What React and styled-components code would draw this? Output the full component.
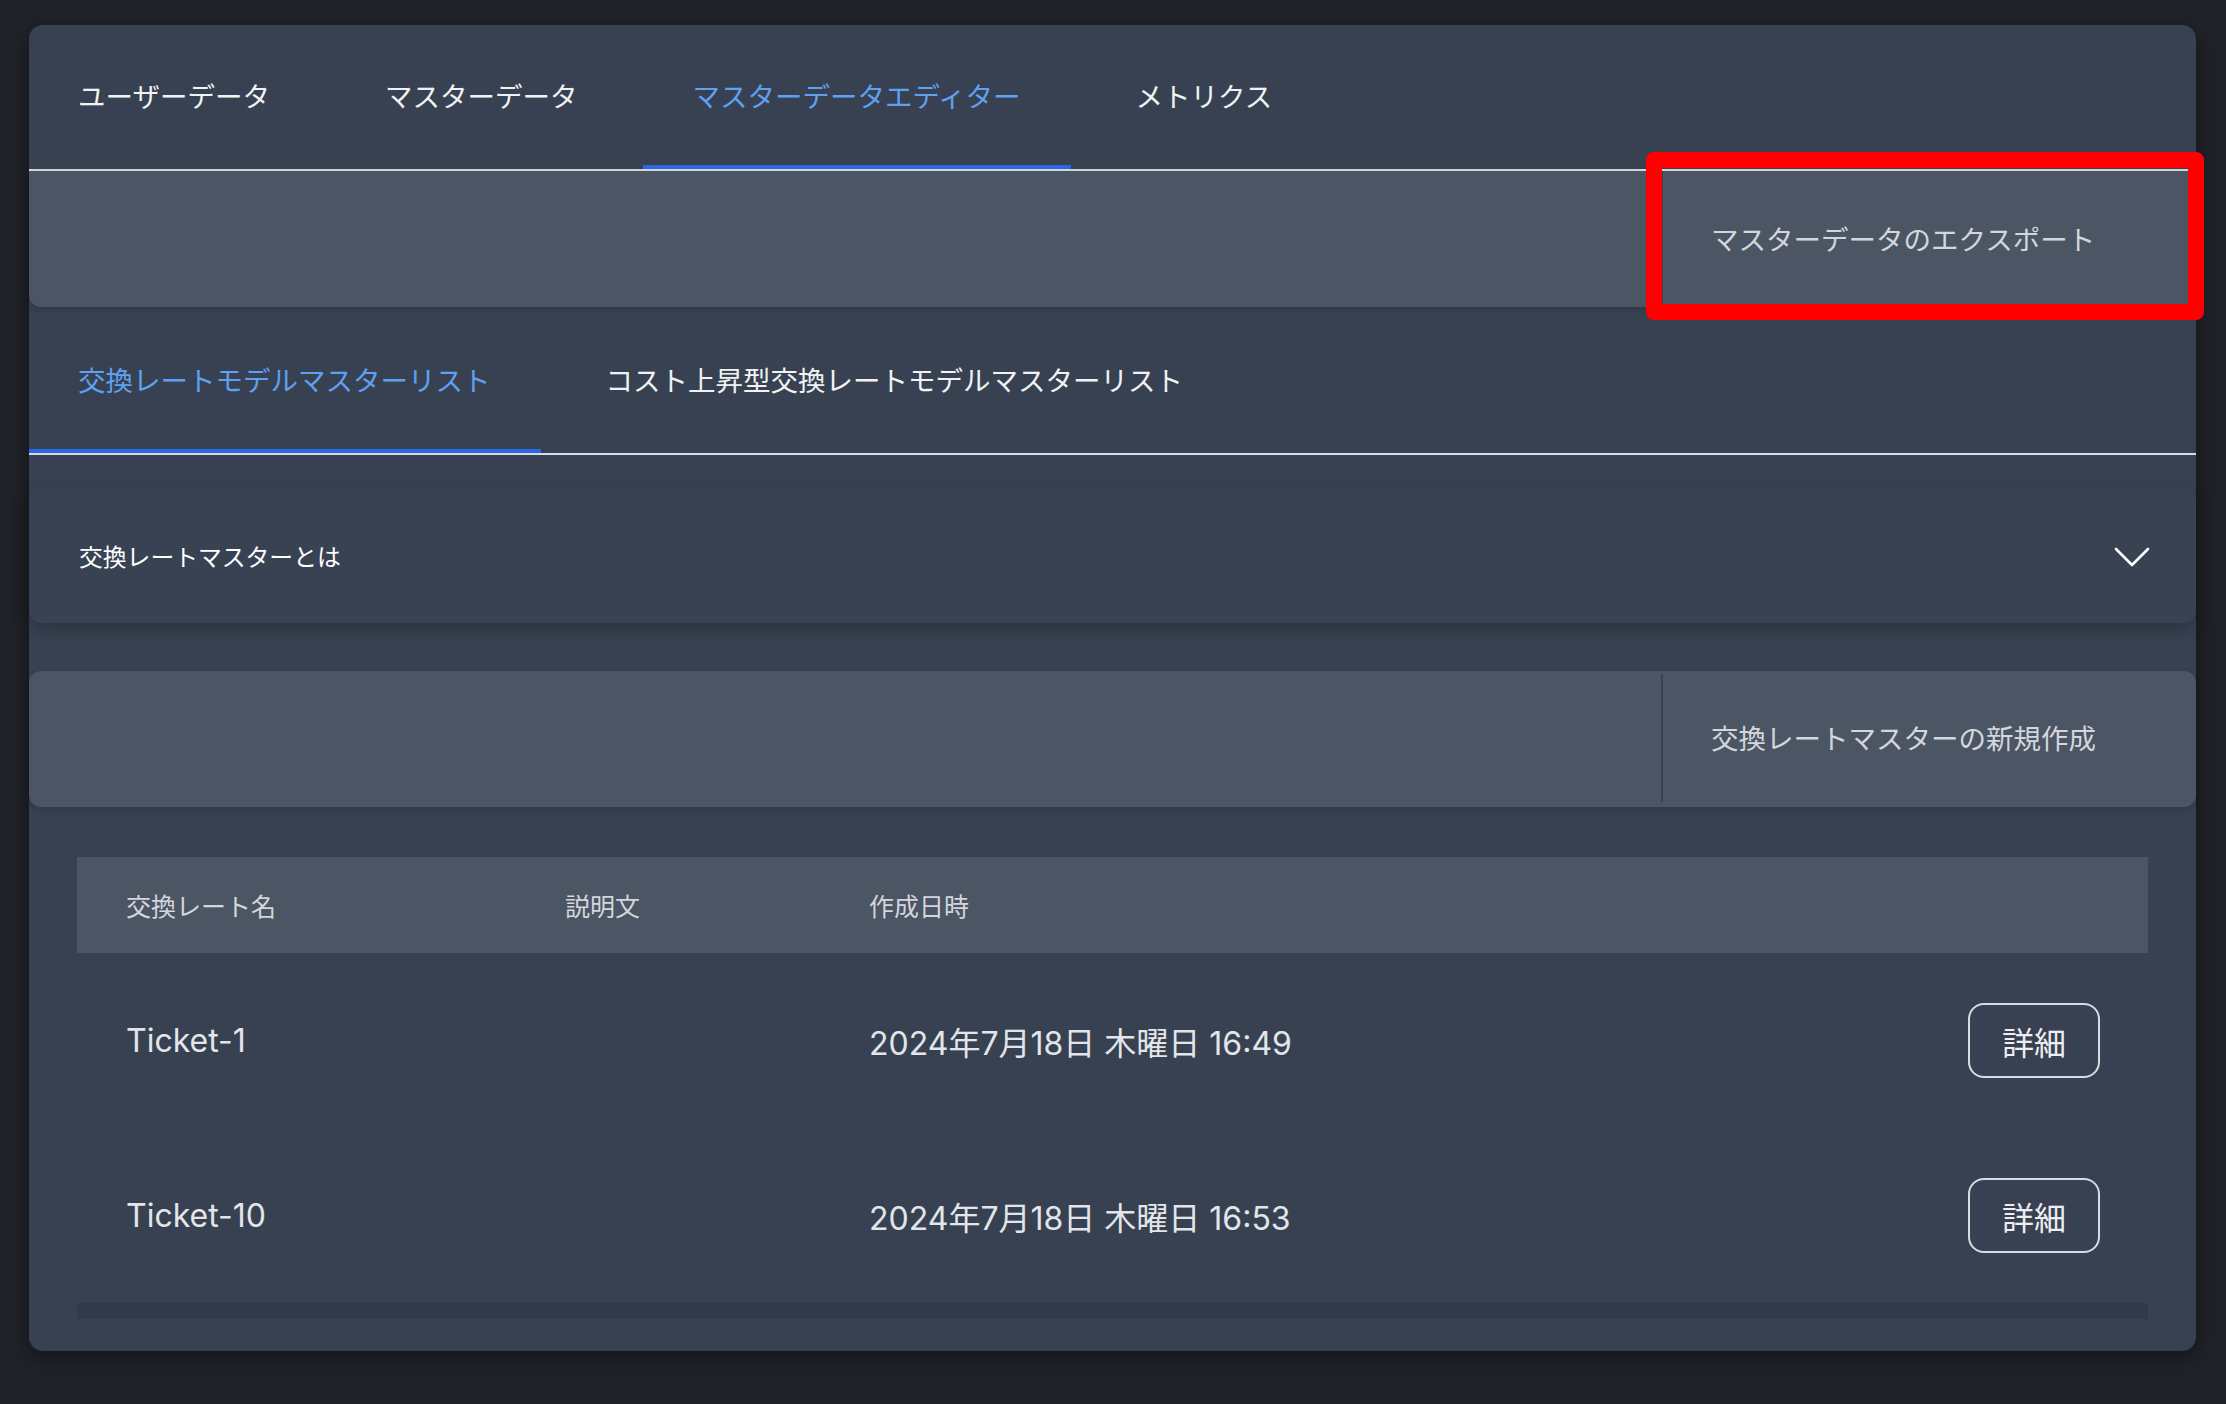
import React from "react";
import styled, { createGlobalStyle } from "styled-components";

const GlobalStyle = createGlobalStyle`
  html, body {
    margin: 0;
    padding: 0;
    background: #202329;
  }
  body {
    font-family: "Inter", "Noto Sans CJK JP", sans-serif;
    -webkit-font-smoothing: antialiased;
  }
`;

const Page = styled.div`
  padding: 25px 30px 53px 29px;
`;

const Card = styled.div`
  background: #374151;
  border-radius: 14px;
  box-shadow: 0 6px 24px rgba(0, 0, 0, 0.45);
`;

const TabBar = styled.div`
  display: flex;
  gap: 16px;
  height: ${(p) => p.height}px;
  border-bottom: 2px solid #d8dbe0;
`;

const Tab = styled.div`
  display: flex;
  align-items: center;
  padding: 0 50px ${(p) => p.lift || 0}px 49px;
  font-size: 27.5px;
  white-space: nowrap;
  color: ${(p) => (p.active ? "#5fa0f2" : "#f1f2f4")};
  box-shadow: ${(p) => (p.active ? "inset 0 -4px 0 #2867e6" : "none")};
  cursor: pointer;
`;

const ActionBar = styled.div`
  display: flex;
  justify-content: flex-end;
  height: 136px;
  background: #4b5563;
  border-radius: ${(p) => (p.flatTop ? "0 0 12px 12px" : "12px")};
  box-shadow: 0 2px 6px rgba(0, 0, 0, 0.15);
`;

const BarButton = styled.div`
  position: relative;
  display: flex;
  align-items: center;
  width: 535px;
  padding-left: 48px;
  padding-bottom: 3px;
  box-sizing: border-box;
  border-left: 2px solid #3a4353;
  margin: ${(p) => (p.inset ? "3px 0 5px" : "0")};
  font-size: 27.5px;
  color: #d3d6dc;
  white-space: nowrap;
  cursor: pointer;
`;

const Highlight = styled.div`
  position: absolute;
  left: -17px;
  top: -19px;
  right: -8px;
  bottom: -13px;
  border: 16px solid #ff0000;
  border-radius: 8px;
  pointer-events: none;
`;

const Accordion = styled.div`
  margin-top: 32px;
  height: 136px;
  display: flex;
  align-items: center;
  justify-content: space-between;
  padding: 0 46px 0 50px;
  background: #394253;
  border-radius: 12px;
  box-shadow: 0 6px 16px rgba(0, 0, 0, 0.22);
  font-size: 23.8px;
  color: #ffffff;

  svg {
    margin-top: 4px;
  }
`;

const BarSpacer = styled.div`
  margin-top: 48px;
`;

const TableWrap = styled.div`
  padding: 50px 48px 32px;
`;

const Grid = styled.div`
  display: grid;
  grid-template-columns: 439px 304px 1fr 200px;
  align-items: center;
  height: ${(p) => p.height}px;
  background: ${(p) => p.bg || "transparent"};
`;

const Cell = styled.div`
  padding-left: 49px;
  font-size: ${(p) => (p.head ? 25 : 32)}px;
  color: ${(p) => (p.head ? "#d3d6dc" : "#e2e5ea")};
  white-space: nowrap;
`;

const ActionCell = styled.div`
  display: flex;
  justify-content: flex-end;
  padding-right: 48px;
`;

const DetailButton = styled.button`
  width: 132px;
  height: 75px;
  border: 2px solid #d8dbe0;
  border-radius: 16px;
  background: transparent;
  color: #eceef1;
  font-family: inherit;
  font-size: 32px;
  cursor: pointer;
`;

const ScrollTrack = styled.div`
  height: 16px;
  background: #313a48;
`;

const Chevron = () => (
  <svg width="36" height="20" viewBox="0 0 36 20" fill="none">
    <polyline
      points="2,2 18,18 34,2"
      stroke="#ffffff"
      strokeWidth="2.6"
      strokeLinecap="round"
      strokeLinejoin="round"
    />
  </svg>
);

const mainTabs = ["ユーザーデータ", "マスターデータ", "マスターデータエディター", "メトリクス"];
const subTabs = ["交換レートモデルマスターリスト", "コスト上昇型交換レートモデルマスターリスト"];

const rows = [
  { name: "Ticket-1", description: "", createdAt: "2024年7月18日 木曜日 16:49" },
  { name: "Ticket-10", description: "", createdAt: "2024年7月18日 木曜日 16:53" },
];

const App = () => {
  return (
    <>
      <GlobalStyle />
      <Page>
        <Card>
          <TabBar height={144}>
            {mainTabs.map((t, i) => (
              <Tab key={t} active={i === 2} lift={5}>
                {t}
              </Tab>
            ))}
          </TabBar>

          <ActionBar flatTop>
            <BarButton>
              マスターデータのエクスポート
              <Highlight />
            </BarButton>
          </ActionBar>

          <TabBar height={146}>
            {subTabs.map((t, i) => (
              <Tab key={t} active={i === 0} lift={2}>
                {t}
              </Tab>
            ))}
          </TabBar>

          <Accordion>
            <span>交換レートマスターとは</span>
            <Chevron />
          </Accordion>

          <BarSpacer>
            <ActionBar>
              <BarButton inset>交換レートマスターの新規作成</BarButton>
            </ActionBar>
          </BarSpacer>

          <TableWrap>
            <Grid height={96} bg="#4b5563">
              <Cell head>交換レート名</Cell>
              <Cell head>説明文</Cell>
              <Cell head>作成日時</Cell>
              <span />
            </Grid>
            {rows.map((r) => (
              <Grid key={r.name} height={175}>
                <Cell>{r.name}</Cell>
                <Cell>{r.description}</Cell>
                <Cell>{r.createdAt}</Cell>
                <ActionCell>
                  <DetailButton>詳細</DetailButton>
                </ActionCell>
              </Grid>
            ))}
            <ScrollTrack />
          </TableWrap>
        </Card>
      </Page>
    </>
  );
};

export default App;
